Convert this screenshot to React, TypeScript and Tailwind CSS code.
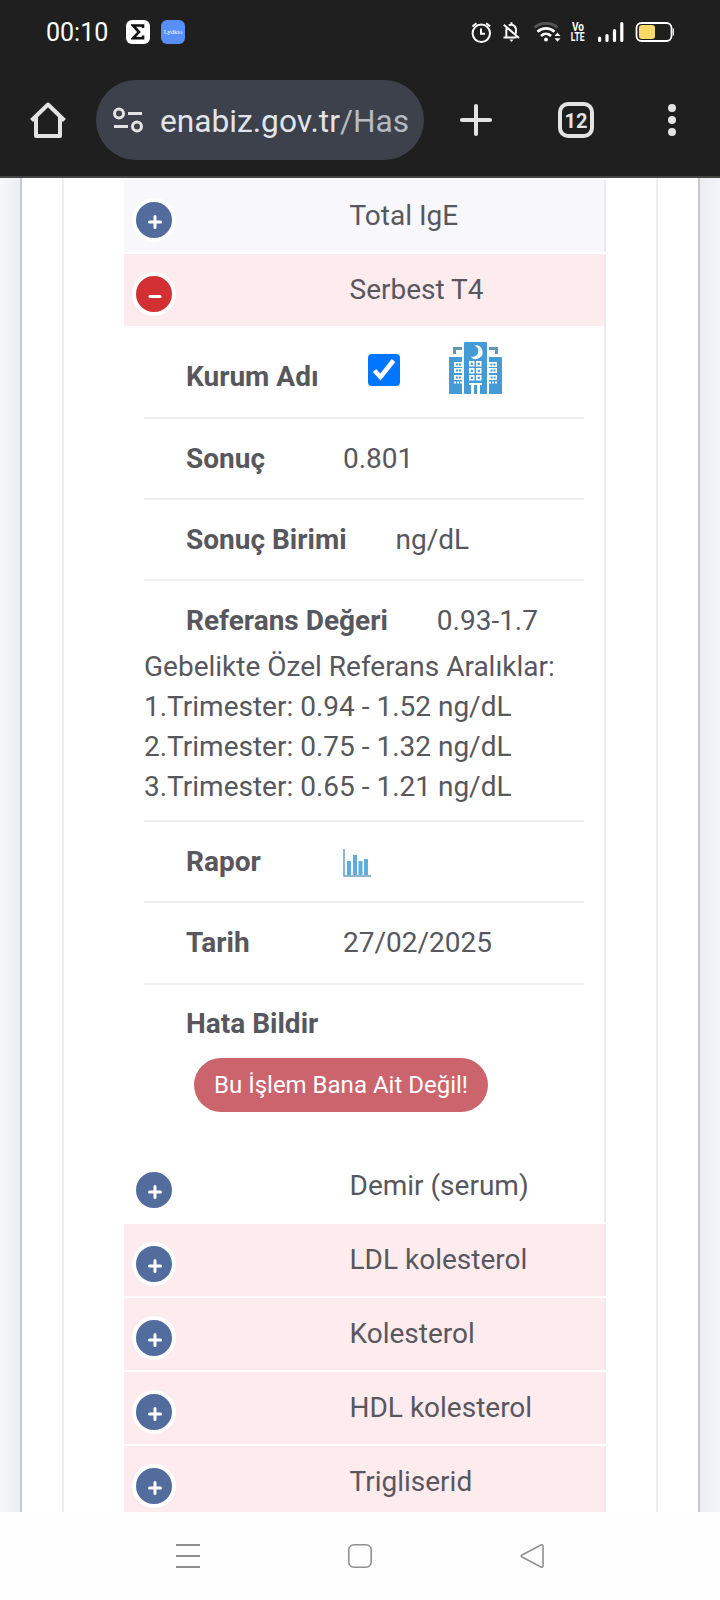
import type { ReactNode } from "react";

type RowTone = "gray" | "white" | "red";

const rowTones: Record<RowTone, string> = {
  gray: "bg-[#f7f7fc]",
  white: "bg-white",
  red: "bg-[#feebee]",
};

const nextResults: { name: string; tone: RowTone }[] = [
  { name: "LDL kolesterol", tone: "red" },
  { name: "Kolesterol", tone: "red" },
  { name: "HDL kolesterol", tone: "red" },
  { name: "Trigliserid", tone: "red" },
];

const referenceNotes = [
  "Gebelikte Özel Referans Aralıklar:",
  "1.Trimester: 0.94 - 1.52 ng/dL",
  "2.Trimester: 0.75 - 1.32 ng/dL",
  "3.Trimester: 0.65 - 1.21 ng/dL",
];

function VoLteIcon() {
  return (
    <div className="flex w-4 flex-col items-center font-bold">
      <span className="h-[10px] origin-center scale-y-125 text-[10px] leading-[10px]">Vo</span>
      <span className="h-[10px] origin-center scale-x-90 scale-y-[1.300] text-[9.500px] leading-[10px]">LTE</span>
    </div>
  );
}

function StatusIcons() {
  return (
    <div className="flex items-center">
      <svg width="102" height="28" viewBox="468 18 102 28" fill="none" stroke="#fff" strokeWidth="2">
        {/* alarm */}
        <circle cx="481.300" cy="33.300" r="8.700" />
        <path d="M481 28.500v5.300h4M472.500 26.500l4-3.300M490.200 26.500l-4-3.300" />
        {/* muted bell */}
        <path d="M503.500 37.500h13M506.300 37v-6.500c0-1.500.3-2.500 1-3.500M508.800 25.500c3-2 7.200 0 7.200 4.500v3.500M511.500 24.500v-2.300M503.800 24.800l15.200 13.200" />
        <path d="M509.500 39.500h4l-2 2.500z" fill="#fff" stroke="none" />
        {/* wifi */}
        <path d="M534.500 27.500c6-5.500 17-5.500 23 0" stroke="#555" strokeWidth="2.600" />
        <path d="M537.500 31.700c5-4.500 12-4.500 17 0M541 36c3-2.800 7-2.800 10 0" strokeWidth="2.600" />
        <circle cx="546" cy="39.500" r="2" fill="#fff" stroke="none" />
        <path d="M554.500 36l3-3.500 3 3.500zM554.500 38.300l3 3.500 3-3.500z" fill="#fff" stroke="none" />
      </svg>
      <VoLteIcon />
      <svg width="88" height="28" viewBox="586 18 88 28" fill="none" stroke="#fff" strokeWidth="1.8">
        {/* signal */}
        <path d="M599.600 38v2.500M607 35.500v5M614.500 30.500v10M621.800 23.500v17" strokeWidth="3.200" strokeLinecap="round" />
        {/* battery */}
        <rect x="636.500" y="23" width="35" height="18" rx="5" />
        <rect x="639" y="25" width="16" height="14" rx="3" fill="#fbd967" stroke="none" />
        <path d="M673.500 28.500v7" />
      </svg>
    </div>
  );
}

function StatusBar() {
  return (
    <div className="flex h-16 items-center pl-[46px] pr-[46px] text-white">
      <span className="w-[80px] text-[25px] leading-none">00:10</span>
      <span className="flex size-6 shrink-0 items-center justify-center rounded-md bg-white">
        <svg width="14" height="16" viewBox="0 0 14 16" fill="none" stroke="#111" strokeWidth="2.600">
          <path d="M12 4V1.500H2L8 8l-6 6.300h10V11.500" />
        </svg>
      </span>
      <span className="ml-[11px] flex size-6 shrink-0 items-center justify-center rounded-md bg-[#588efa] font-['Liberation_Serif',serif] text-[6.500px]">
        Lydkto
      </span>
      <div className="ml-auto">
        <StatusIcons />
      </div>
    </div>
  );
}

function BrowserBar() {
  return (
    <div className="flex h-28 items-center">
      <button className="ml-[30px] size-9 shrink-0" aria-label="Home">
        <svg width="36" height="36" viewBox="0 0 36 36" fill="none" stroke="#e3e3e3" strokeWidth="4" strokeLinejoin="round">
          <path d="M1.500 18.500L18 2.500l16.500 16M6 15v19h24V15" />
        </svg>
      </button>
      <div className="ml-[30px] flex h-20 w-[328px] shrink-0 items-center overflow-hidden rounded-full bg-[#3c414b] pl-4">
        <svg width="32" height="28" viewBox="0 0 32 28" fill="none" stroke="#e3e3e3" strokeWidth="3" className="shrink-0">
          <circle cx="7" cy="7.500" r="4.500" />
          <path d="M16 7.500h14M2 20.500h14" />
          <circle cx="25" cy="20.500" r="4.500" />
        </svg>
        <div className="ml-4 mt-1 shrink-0 whitespace-nowrap text-[31.700px] leading-10 text-[#e1e4ea]">
          enabiz.gov.tr<span className="text-[#b5bac3]">/Has</span>
        </div>
      </div>
      <button className="ml-9 size-8 shrink-0" aria-label="New tab">
        <svg width="32" height="32" viewBox="0 0 32 32" stroke="#e3e3e3" strokeWidth="4" strokeLinecap="round">
          <path d="M16 2v28M2 16h28" />
        </svg>
      </button>
      <button className="ml-[66px] flex size-9 shrink-0 items-center justify-center rounded-[10px] border-4 border-[#e3e3e3] pt-0.5 text-[20px] font-bold leading-none text-[#e3e3e3]">
        12
      </button>
      <button className="ml-[74px] flex shrink-0 flex-col gap-1" aria-label="Menu">
        <span className="size-2 rounded-full bg-[#e3e3e3]" />
        <span className="size-2 rounded-full bg-[#e3e3e3]" />
        <span className="size-2 rounded-full bg-[#e3e3e3]" />
      </button>
    </div>
  );
}

function ResultRow({ name, tone, open = false }: { name: string; tone: RowTone; open?: boolean }) {
  return (
    <div className={`flex h-[72px] shrink-0 border-r-2 border-[#ebebf1] pl-2 ${rowTones[tone]}`}>
      <button
        className={`mt-[18px] flex size-11 shrink-0 items-center justify-center rounded-full border-4 border-white ${
          open ? "bg-[#d33033]" : "bg-[#516c9d]"
        }`}
      >
        <svg width="14" height="14" viewBox="0 0 14 14" stroke="#fff" strokeWidth="3" strokeLinecap="round" className="ml-px mt-1">
          <path d={open ? "M2 7.500h10" : "M1.500 7h11M7 1.500v11"} />
        </svg>
      </button>
      <span className="ml-[173.500px] mt-4 leading-10">{name}</span>
    </div>
  );
}

interface DetailProps {
  label: string;
  children?: ReactNode;
  notes?: string[];
  size?: string;
}

function Detail({ label, children, notes = [], size = "h-[81px]" }: DetailProps) {
  return (
    <li className={`shrink-0 border-b-2 border-[#eeeeee] pt-5 ${size}`}>
      <div className="mb-1.5 flex leading-10">
        <span className="ml-[42px] min-w-[157px] pr-[49px] font-bold">{label}</span>
        {children}
      </div>
      {notes.map((note) => (
        <p key={note} className="whitespace-nowrap leading-10">{note}</p>
      ))}
    </li>
  );
}

function HospitalIcon() {
  return (
    <svg width="53" height="52" viewBox="0 0 53 52" fill="#449bd6">
      <rect x="15" y="0" width="23" height="52" rx="1" />
      <path d="M1 15h12v37H1a1 1 0 0 1-1-1V16a1 1 0 0 1 1-1zM40 15h12a1 1 0 0 1 1 1v35a1 1 0 0 1-1 1H40z" />
      <path d="M5.500 12V6.500H13M47.500 12V6.500H40" fill="none" stroke="#6495b5" strokeWidth="3" />
      <path d="M25.500 3.500A6.800 6.800 0 1 1 21.500 14.500A5.600 5.600 0 1 0 25.500 3.500z" fill="#fff" />
      <g fill="#fff">
        <path d="M20 19h5.500v5.500H20zM27 19h5.500v5.500H27zM20 26h5.500v5.500H20zM27 26h5.500v5.500H27zM20 33h5.500v5.500H20zM27 33h5.500v5.500H27z" />
        <path d="M5 20h8v5H5zM5 26h8v5H5zM5 33h8v5H5zM40 20h8v5h-8zM40 26h8v5h-8zM40 33h8v5h-8z" />
        <path d="M20 41h13v2h-2v9h-3v-9h-3v9h-3v-9h-2z" />
      </g>
      <path d="M21.700 20.800h2.200v2.200h-2.200zM28.600 20.800h2.200v2.200h-2.200zM21.700 27.800h2.200v2.200h-2.200zM28.600 27.800h2.200v2.200h-2.200zM21.700 34.800h2.200v2.200h-2.200zM28.600 34.800h2.200v2.200h-2.200z" />
      <path d="M7 22.500h5M7 28.500h5M7 35.500h5M41.500 22.500h5M41.500 28.500h5M41.500 35.500h5" stroke="#449bd6" strokeWidth="2" strokeDasharray="2 1" />
      <path d="M5 40.500h8M40 40.500h8" stroke="#fff" strokeWidth="2" strokeDasharray="2 1" />
    </svg>
  );
}

function CheckedBox() {
  return (
    <svg width="32" height="32" viewBox="0 0 32 32" role="checkbox" aria-checked="true">
      <rect width="32" height="32" rx="4" fill="#0075ff" />
      <path d="M6.500 16.500l6 6.500L25.500 6.500" fill="none" stroke="#fff" strokeWidth="4.500" />
    </svg>
  );
}

function ResultDetails() {
  return (
    <div className="h-[824px] shrink-0 border-r-2 border-[#ebebf1] px-5">
      <ul>
        <li className="flex h-[93px] border-b-2 border-[#eeeeee]">
          <span className="ml-[42px] mt-[31px] pr-[49px] font-bold leading-10">Kurum Adı</span>
          <div className="mt-7 shrink-0">
            <CheckedBox />
          </div>
          <div className="ml-[49px] mt-4 shrink-0">
            <HospitalIcon />
          </div>
        </li>
        <Detail label="Sonuç">0.801</Detail>
        <Detail label="Sonuç Birimi">ng/dL</Detail>
        <Detail label="Referans Değeri" size="h-[241px]" notes={referenceNotes}>
          0.93-1.7
        </Detail>
        <Detail label="Rapor">
          <svg width="28" height="28" viewBox="0 0 28 28" fill="#5fade0" className="mt-[7px]">
            <path d="M4 12h4v14H4zM10 6h4v20h-4zM15.500 12h4v14h-4zM21 10h4v16h-4z" />
            <path d="M1 0v27h27" fill="none" stroke="#6b9fc0" strokeWidth="1.500" />
          </svg>
        </Detail>
        <Detail label="Tarih" size="h-[82px]">27/02/2025</Detail>
      </ul>
      <div className="pl-[42px] pt-[19px]">
        <div className="font-bold leading-10">Hata Bildir</div>
        <button className="ml-2 mt-3.5 h-[54px] w-[294px] rounded-full bg-[#cb646c] text-[24px] text-white">
          Bu İşlem Bana Ait Değil!
        </button>
      </div>
    </div>
  );
}

function NavBar() {
  return (
    <div className="flex h-[88px] shrink-0 items-center justify-center gap-[146px] bg-[#fefefe]">
      <svg width="26" height="26" viewBox="0 0 26 26" fill="none" stroke="#8f8f8f" strokeWidth="2">
        <path d="M1 2h24M1 13h24M1 24h24" />
      </svg>
      <svg width="26" height="26" viewBox="0 0 26 26" fill="none" stroke="#8f8f8f" strokeWidth="1.600">
        <rect x="1.800" y="1.800" width="22.400" height="22.400" rx="5" />
      </svg>
      <svg width="26" height="26" viewBox="0 0 26 26" fill="none" stroke="#8f8f8f" strokeWidth="1.600" strokeLinejoin="round">
        <path d="M22 2L3 12c-1 .6-1 1.400 0 2l19 10c1 .5 2 0 2-1V3c0-1-1-1.500-2-1z" />
      </svg>
    </div>
  );
}

export default function App() {
  return (
    <div className="flex h-[1600px] w-[720px] flex-col overflow-hidden bg-white font-['Roboto',sans-serif] text-[28px] text-[#57575d]">
      <header className="h-[178px] shrink-0 border-b-2 border-[#444] bg-[#1f1f1f]">
        <StatusBar />
        <BrowserBar />
      </header>

      <main className="flex min-h-0 flex-1 overflow-hidden">
        <div className="w-5 shrink-0 bg-linear-to-r from-[#f5f7fb] to-[#ecedf1]" />
        <div className="flex w-[680px] shrink-0 border-x-2 border-[#c9c9cb] px-10">
          <div className="flex w-[596px] shrink-0 border-x-2 border-[#eeeeef]">
            <div className="ml-[60px] flex w-[482px] shrink-0 flex-col gap-0.5 pt-0.5">
              <ResultRow name="Total IgE" tone="gray" />
              <div className="flex shrink-0 flex-col">
                <ResultRow name="Serbest T4" tone="red" open />
                <ResultDetails />
                <ResultRow name="Demir (serum)" tone="white" />
              </div>
              {nextResults.map((r) => (
                <ResultRow key={r.name} name={r.name} tone={r.tone} />
              ))}
            </div>
          </div>
        </div>
        <div className="w-5 shrink-0 bg-linear-to-r from-[#ecedf1] to-[#f3f5fa]" />
      </main>

      <NavBar />
    </div>
  );
}
